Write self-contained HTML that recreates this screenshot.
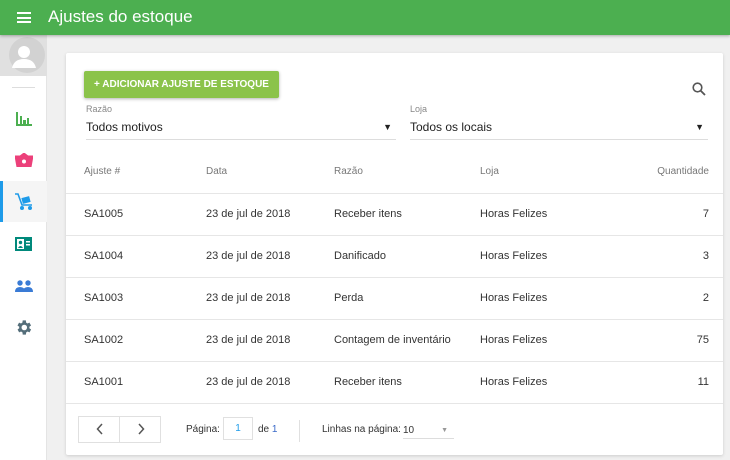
<!DOCTYPE html>
<html><head><meta charset="utf-8"><style>
*{box-sizing:border-box;margin:0;padding:0}
body{width:730px;height:460px;overflow:hidden;background:#f0f0f0;font-family:"Liberation Sans",sans-serif;position:relative;color:#333}
.hdr{position:absolute;left:0;top:0;width:730px;height:35px;background:#4caf50;box-shadow:0 1px 3px rgba(0,0,0,.3);z-index:2}
.hdr .t{position:absolute;left:48px;top:7px;color:#fff;font-size:17px}
.ham{position:absolute;left:17px;top:12px;width:14px;height:11px;border-top:2px solid #fff;border-bottom:2px solid #fff}
.ham:after{content:"";position:absolute;left:0;top:2.5px;width:14px;height:2px;background:#fff}
.side{position:absolute;left:0;top:35px;width:47px;height:425px;background:#fff;border-right:1px solid #e4e4e4}
.av{position:absolute;left:0;top:0;width:47px;height:41px;background:#e0e0e0;overflow:hidden}
.sel{position:absolute;left:0;top:146px;width:47px;height:41px;background:#f5f5f5;border-left:3px solid #1e9be9}
.card{position:absolute;left:66px;top:53px;width:657px;height:402px;background:#fff;border-radius:2px;box-shadow:0 1px 3px rgba(0,0,0,.15)}
.btn{position:absolute;left:18px;top:18px;width:195px;height:27px;background:#8bc34a;color:#fff;font-size:10px;font-weight:bold;text-align:center;line-height:27px;border-radius:2px;box-shadow:0 1px 3px rgba(0,0,0,.3);white-space:nowrap}
.lbl{position:absolute;font-size:9px;color:#888}
.sel2{position:absolute;font-size:12px;color:#222;border-bottom:1px solid #ddd;height:22px;line-height:18px}
.sel2 span{position:absolute;right:4px;top:0;font-size:9px}
.th{position:absolute;top:113px;font-size:10px;color:#777}
.row{position:absolute;left:0;width:657px;height:42px;border-top:1px solid #e6e6e6;font-size:11px;color:#333}
.row div{position:absolute;top:14px}
.foot{position:absolute;left:0;top:350px;width:657px;border-top:1px solid #e6e6e6}
</style></head><body>
<div class="hdr"><div class="ham"></div><div class="t">Ajustes do estoque</div></div>
<div class="side">
<div class="av"><svg width="47" height="41"><circle cx="27" cy="20" r="18" fill="#d2d2d2"/><circle cx="24" cy="17" r="6" fill="#fff"/><path d="M12 33 Q14 24 24 24 Q34 24 36 33 Z" fill="#fff"/></svg></div>
<div style="position:absolute;left:12px;top:52px;width:23px;height:1px;background:#ddd"></div>
<svg style="position:absolute;left:16px;top:77px" width="16" height="14"><path d="M0 0v14h16v-2H2V0z M4 4h2v8H4z M7 8h3v4H7z M11 6h2v6h-2z" fill="#4caf50"/></svg>
<svg style="position:absolute;left:15px;top:118px" width="18" height="14"><path d="M0 3h18l-2 11H2z M5 3l4-3 4 3" fill="#ec407a" stroke="#ec407a"/><circle cx="9" cy="8.5" r="2" fill="#fff"/></svg>
<div class="sel"><svg style="position:absolute;left:11px;top:12px" width="20" height="18"><path d="M1 1h3l4 11h10" stroke="#1e9be9" stroke-width="1.6" fill="none"/><rect x="8" y="4" width="8" height="6" fill="#1e9be9" transform="rotate(-15 12 7)"/><circle cx="8" cy="15" r="2" fill="#1e9be9"/><circle cx="16" cy="15" r="2" fill="#1e9be9"/></svg></div>
<svg style="position:absolute;left:15px;top:202px" width="17" height="14"><rect width="17" height="14" fill="#00897b"/><rect x="2" y="2" width="7" height="10" fill="#fff"/><circle cx="5.5" cy="5.5" r="1.7" fill="#00897b"/><path d="M3 11q2.5-4 5 0z" fill="#00897b"/><rect x="11" y="4" width="4" height="1.5" fill="#fff"/><rect x="11" y="7" width="4" height="1.5" fill="#fff"/></svg>
<svg style="position:absolute;left:15px;top:245px" width="18" height="12"><circle cx="5" cy="3" r="2.7" fill="#3a7bd5"/><circle cx="13" cy="3" r="2.7" fill="#3a7bd5"/><path d="M0 12q0-5 5-5t5 5z M8 12q0-5 5-5t5 5z" fill="#3a7bd5"/></svg>
<svg style="position:absolute;left:14px;top:283px" width="19" height="19" viewBox="0 0 24 24"><path fill="#546e7a" d="M19.4 13a7.5 7.5 0 0 0 0-2l2.1-1.6-2-3.5-2.5 1a7 7 0 0 0-1.7-1L15 3h-4l-.4 2.9a7 7 0 0 0-1.7 1l-2.5-1-2 3.5L6.6 11a7.5 7.5 0 0 0 0 2l-2.1 1.6 2 3.5 2.5-1a7 7 0 0 0 1.7 1L11 21h4l.4-2.9a7 7 0 0 0 1.7-1l2.5 1 2-3.5zM13 15.5a3.5 3.5 0 1 1 0-7 3.5 3.5 0 0 1 0 7z"/></svg>
</div>
<div class="card">
<div class="btn">+ ADICIONAR AJUSTE DE ESTOQUE</div>
<svg style="position:absolute;left:626px;top:29px" width="14" height="14"><circle cx="5.5" cy="5.5" r="4.3" stroke="#555" stroke-width="1.6" fill="none"/><path d="M8.6 8.6L13 13" stroke="#555" stroke-width="1.8"/></svg>
<div class="lbl" style="left:20px;top:51px">Razão</div>
<div class="sel2" style="left:20px;top:65px;width:310px">Todos motivos<span>▼</span></div>
<div class="lbl" style="left:344px;top:51px">Loja</div>
<div class="sel2" style="left:344px;top:65px;width:298px">Todos os locais<span>▼</span></div>
<div class="th" style="left:18px">Ajuste #</div>
<div class="th" style="left:140px">Data</div>
<div class="th" style="left:268px">Razão</div>
<div class="th" style="left:414px">Loja</div>
<div class="th" style="right:14px">Quantidade</div>
<div class="row" style="top:140px"><div style="left:18px">SA1005</div><div style="left:140px">23 de jul de 2018</div><div style="left:268px">Receber itens</div><div style="left:414px">Horas Felizes</div><div style="right:14px">7</div></div>
<div class="row" style="top:182px"><div style="left:18px">SA1004</div><div style="left:140px">23 de jul de 2018</div><div style="left:268px">Danificado</div><div style="left:414px">Horas Felizes</div><div style="right:14px">3</div></div>
<div class="row" style="top:224px"><div style="left:18px">SA1003</div><div style="left:140px">23 de jul de 2018</div><div style="left:268px">Perda</div><div style="left:414px">Horas Felizes</div><div style="right:14px">2</div></div>
<div class="row" style="top:266px"><div style="left:18px">SA1002</div><div style="left:140px">23 de jul de 2018</div><div style="left:268px">Contagem de inventário</div><div style="left:414px">Horas Felizes</div><div style="right:14px">75</div></div>
<div class="row" style="top:308px"><div style="left:18px">SA1001</div><div style="left:140px">23 de jul de 2018</div><div style="left:268px">Receber itens</div><div style="left:414px">Horas Felizes</div><div style="right:14px">11</div></div>
<div class="foot"></div>
<div style="position:absolute;left:12px;top:363px;width:83px;height:27px;border:1px solid #e0e0e0"></div>
<div style="position:absolute;left:53px;top:363px;width:1px;height:27px;background:#e0e0e0"></div>
<svg style="position:absolute;left:30px;top:370px" width="8" height="12"><path d="M6 1L1.5 6 6 11" stroke="#555" stroke-width="1.5" fill="none"/></svg>
<svg style="position:absolute;left:71px;top:370px" width="8" height="12"><path d="M2 1l4.5 5L2 11" stroke="#555" stroke-width="1.5" fill="none"/></svg>
<div style="position:absolute;left:120px;top:371px;font-size:10px">Página:</div>
<div style="position:absolute;left:157px;top:364px;width:30px;height:23px;border:1px solid #e0e0e0;font-size:10px;color:#1e9be9;text-align:center;line-height:21px">1</div>
<div style="position:absolute;left:192px;top:371px;font-size:10px">de <span style="color:#3a6ac8">1</span></div>
<div style="position:absolute;left:233px;top:367px;width:1px;height:22px;background:#e0e0e0"></div>
<div style="position:absolute;left:256px;top:371px;font-size:10px">Linhas na página:</div>
<div style="position:absolute;left:337px;top:368px;width:51px;height:18px;border-bottom:1px solid #ddd;font-size:10px;line-height:16px;padding-top:2px">10<span style="position:absolute;right:6px;top:2px;color:#999;font-size:7px">▼</span></div>
</div>
</body></html>
